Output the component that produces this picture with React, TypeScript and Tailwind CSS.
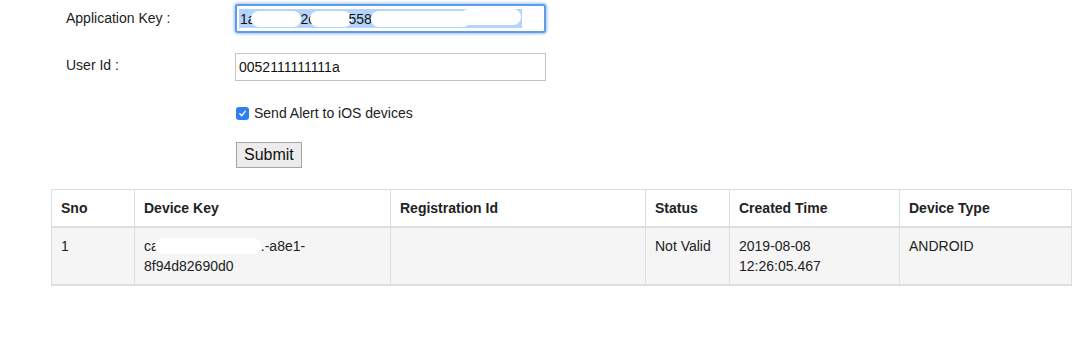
import React from "react";

const Blob = ({ w, className = "" }: { w: number; className?: string }) => (
  <span
    className={`inline-block bg-white rounded-full align-middle h-[16px] shrink-0 ${className}`}
    style={{ width: w }}
  />
);

export default function App() {
  return (
    <div className="bg-white w-[1092px] h-[340px] overflow-hidden text-[14px] text-[#222]" style={{ fontFamily: '"Liberation Sans", Arial, sans-serif' }}>
      <div className="pl-[66px] pt-[4px]">
        <div className="flex">
          <div className="w-[169px] pt-[6px] leading-[16px]">Application Key :</div>
          <div className="w-[311px] h-[29px] rounded-[3px] border-[2px] border-[#5f9ce8] shadow-[0_0_3px_1px_#9cc3f2] bg-white flex items-center px-[2px]">
            <div className="h-[19px] w-[283px] bg-[#b4d4fb] flex items-center overflow-hidden leading-[16px] text-[#111] whitespace-nowrap">
              <span className="pl-[1px]">1a</span>
              <Blob w={50} className="-ml-[5px]" />
              <span>2c</span>
              <Blob w={42} className="-ml-[5px]" />
              <span className="-ml-[4px]">558-</span>
              <Blob w={100} className="-ml-[5px]" />
              <Blob w={60} className="-ml-[10px] h-[12px] -mt-[4px]" />
            </div>
          </div>
        </div>
        <div className="flex mt-[20px]">
          <div className="w-[169px] pt-[4px] leading-[16px]">User Id :</div>
          <div className="w-[311px] h-[28px] border border-[#c4c4c4] bg-white flex items-center pl-[3px] text-[14px] leading-[16px] text-[#111]">
            0052111111111a
          </div>
        </div>
        <div className="flex mt-[24px] ml-[170px] items-center">
          <span className="w-[13px] h-[13px] rounded-[3px] bg-[#2f7ff2] flex items-center justify-center">
            <svg width="9" height="9" viewBox="0 0 10 10">
              <path d="M2 5.2 L4.2 7.4 L8 2.6" stroke="white" strokeWidth="1.6" fill="none" strokeLinecap="round" strokeLinejoin="round" />
            </svg>
          </span>
          <span className="ml-[5px] leading-[16px]">Send Alert to iOS devices</span>
        </div>
        <div className="mt-[21px] ml-[170px]">
          <button className="h-[26px] px-[7px] border border-[#a5a5a5] bg-[#ececec] text-[16px] leading-[18px] text-[#111]" style={{ fontFamily: '"Liberation Sans", Arial, sans-serif' }}>
            Submit
          </button>
        </div>
      </div>
      <div className="ml-[51px] mt-[21px] w-[1021px]">
        <table className="w-full border-collapse border border-[#dddddd] table-fixed">
          <colgroup>
            <col style={{ width: 83 }} />
            <col style={{ width: 256 }} />
            <col style={{ width: 255 }} />
            <col style={{ width: 84 }} />
            <col style={{ width: 170 }} />
            <col />
          </colgroup>
          <thead>
            <tr className="border-b-2 border-[#dddddd] text-left">
              {["Sno", "Device Key", "Registration Id", "Status", "Created Time", "Device Type"].map((h) => (
                <th key={h} className="border border-[#dddddd] border-b-2 px-[9px] py-[8px] leading-[20px] font-bold text-[#222]">
                  {h}
                </th>
              ))}
            </tr>
          </thead>
          <tbody>
            <tr className="bg-[#f5f5f5] align-top border-b-2 border-[#dddddd]">
              <td className="border border-[#dddddd] border-b-2 px-[9px] py-[8px] leading-[20px]">1</td>
              <td className="border border-[#dddddd] border-b-2 px-[9px] py-[8px] leading-[20px]">
                <div className="flex items-center">
                  <span>ca</span>
                  <Blob w={106} className="-ml-[4px]" />
                  <span>.-a8e1-</span>
                </div>
                <div>8f94d82690d0</div>
              </td>
              <td className="border border-[#dddddd] border-b-2 px-[9px] py-[8px] leading-[20px]"></td>
              <td className="border border-[#dddddd] border-b-2 px-[9px] py-[8px] leading-[20px]">Not Valid</td>
              <td className="border border-[#dddddd] border-b-2 px-[9px] py-[8px] leading-[20px]">
                2019-08-08
                <br />
                12:26:05.467
              </td>
              <td className="border border-[#dddddd] border-b-2 px-[9px] py-[8px] leading-[20px]">ANDROID</td>
            </tr>
          </tbody>
        </table>
      </div>
    </div>
  );
}
